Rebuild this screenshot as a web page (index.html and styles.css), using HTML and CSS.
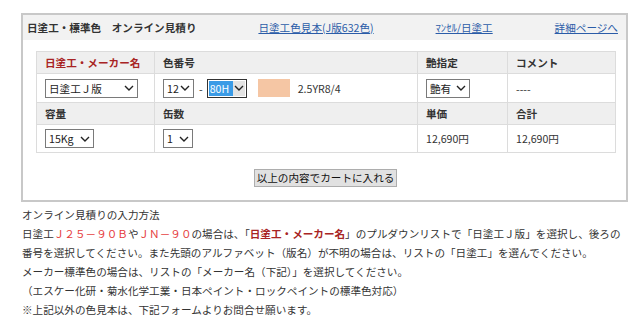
FILE: index.html
```html
<!DOCTYPE html>
<html lang="ja">
<head>
<meta charset="utf-8">
<title>日塗工・標準色 オンライン見積り</title>
<link rel="stylesheet" href="styles.css">
</head>
<body>
<div class="page">
  <div class="box">
    <div class="head">
      <span class="title">日塗工・標準色　オンライン見積り</span>
      <a class="lnk" href="#">日塗工色見本(J版632色)</a>
      <a class="lnk" href="#">ﾏﾝｾﾙ/日塗工</a>
      <a class="lnk" href="#">詳細ページへ</a>
    </div>
    <div class="content">
      <table class="est">
        <colgroup>
          <col class="c1"><col class="c2"><col class="c3"><col class="c4">
        </colgroup>
        <tr class="th">
          <td class="red">日塗工・メーカー名</td>
          <td>色番号</td>
          <td>艶指定</td>
          <td>コメント</td>
        </tr>
        <tr class="tr">
          <td><span class="sel w93"><span class="val">日塗工Ｊ版</span><svg class="chev" width="10" height="6" viewBox="0 0 10 6"><path d="M1 1 L5 5 L9 1" fill="none" stroke="#222" stroke-width="1.4"/></svg></span></td>
          <td>
            <div class="colorcell">
              <span class="sel w31"><span class="val">12</span><svg class="chev" width="10" height="6" viewBox="0 0 10 6"><path d="M1 1 L5 5 L9 1" fill="none" stroke="#222" stroke-width="1.4"/></svg></span>
              <span class="dash">-</span>
              <span class="sel focus w40"><span class="val hl">80H</span><span class="arr"><svg class="chev" width="10" height="6" viewBox="0 0 10 6"><path d="M1 1 L5 5 L9 1" fill="none" stroke="#222" stroke-width="1.4"/></svg></span></span>
              <span class="swatch"></span>
              <span class="code">2.5YR8/4</span>
            </div>
          </td>
          <td><span class="sel w44"><span class="val">艶有</span><svg class="chev" width="10" height="6" viewBox="0 0 10 6"><path d="M1 1 L5 5 L9 1" fill="none" stroke="#222" stroke-width="1.4"/></svg></span></td>
          <td>----</td>
        </tr>
        <tr class="th">
          <td>容量</td>
          <td>缶数</td>
          <td>単価</td>
          <td>合計</td>
        </tr>
        <tr class="tr">
          <td><span class="sel w49"><span class="val">15Kg</span><svg class="chev" width="10" height="6" viewBox="0 0 10 6"><path d="M1 1 L5 5 L9 1" fill="none" stroke="#222" stroke-width="1.4"/></svg></span></td>
          <td><span class="sel w30"><span class="val">1</span><svg class="chev" width="10" height="6" viewBox="0 0 10 6"><path d="M1 1 L5 5 L9 1" fill="none" stroke="#222" stroke-width="1.4"/></svg></span></td>
          <td>12,690円</td>
          <td>12,690円</td>
        </tr>
      </table>
      <div class="btnrow"><button class="btn" type="button">以上の内容でカートに入れる</button></div>
    </div>
  </div>
  <div class="notes">
    <p>オンライン見積りの入力方法</p>
    <p>日塗工<span class="r">Ｊ２５－９０Ｂ</span>や<span class="r">ＪＮ－９０</span>の場合は、「<b class="dr">日塗工・メーカー名</b>」のプルダウンリストで「日塗工Ｊ版」を選択し、後ろの<br>番号を選択してください。また先頭のアルファベット（版名）が不明の場合は、リストの「日塗工」を選んでください。</p>
    <p>メーカー標準色の場合は、リストの「メーカー名（下記）」を選択してください。</p>
    <p>（エスケー化研・菊水化学工業・日本ペイント・ロックペイントの標準色対応）</p>
    <p>※上記以外の色見本は、下記フォームよりお問合せ願います。</p>
  </div>
</div>
</body>
</html>
```
FILE: styles.css
```css
* { box-sizing: border-box; }
html, body { margin: 0; padding: 0; background: #fff; }
body {
  font-family: "Noto Sans CJK JP", "Noto Sans", sans-serif;
  font-size: 10.6px;
  color: #333;
}
.page { margin-left: 21px; padding-top: 13px; width: 607px; }
.box { border: 2px solid #c8c8c8; }
.head {
  display: flex;
  justify-content: space-between;
  align-items: center;
  height: 25px;
  background: #f2f2f2;
  padding: 0 8px 0 4px;
}
.title { font-weight: 700; color: #333; }
.lnk { color: #2b5ca8; text-decoration: underline; }
.content { padding: 11px 11px 13px 13px; }
.est {
  width: 579px;
  border-collapse: collapse;
  table-layout: fixed;
  border: 1px solid #dcdcdc;
}
.c1 { width: 118px; }
.c2 { width: 263px; }
.c3 { width: 90px; }
.c4 { width: 108px; }
.est td {
  border: 1px solid #dcdcdc;
  padding: 0 0 0 8px;
  vertical-align: middle;
  white-space: nowrap;
}
.est td:nth-child(2) { padding-left: 8px; }
.th td { background: #efefef; height: 22px; font-weight: 700; color: #333; }
.th td.red { color: #a82424; }
.tr td { height: 29px; }
.tr:last-child td { height: 28px; }
.sel {
  display: inline-flex;
  align-items: center;
  justify-content: space-between;
  height: 19px;
  border: 1px solid #7a7a7a;
  background: #fff;
  padding: 0 3px 0 3px;
  color: #222;
  vertical-align: middle;
}
.chev { display: block; flex: none; }
.w93 { width: 93px; }
.w31 { width: 31px; }
.w40 { width: 40px; }
.w44 { width: 44px; }
.w49 { width: 49px; }
.w30 { width: 30px; }
.sel.focus { border-color: #333; padding: 1px; align-items: stretch; }
.sel.focus .hl {
  background: #3a9be6;
  color: #fff;
  padding: 0 1px;
  display: flex;
  align-items: center;
  flex: 1;
}
.sel.focus .arr {
  background: #e3e3e3;
  display: flex;
  align-items: center;
  padding: 0 1px;
}
.colorcell { display: flex; align-items: center; }
.dash { margin: 0 4px 0 5px; }
.swatch { width: 32px; height: 18px; background: #f5c6a4; margin-left: 11px; }
.code { margin-left: 8px; }
.btnrow { display: flex; justify-content: center; margin-top: 16px; }
.btn {
  font-family: inherit;
  font-size: 10.6px;
  height: 18px;
  padding: 0 2px;
  background: #e1e1e1;
  border: 1px solid #adadad;
  color: #111;
  line-height: 16px;
}
.notes { padding: 3px 0 0 1px; }
.notes p { margin: 0; line-height: 19px; white-space: nowrap; }
.r { color: #e53a3a; }
.dr { color: #a82424; font-weight: 700; }
```
